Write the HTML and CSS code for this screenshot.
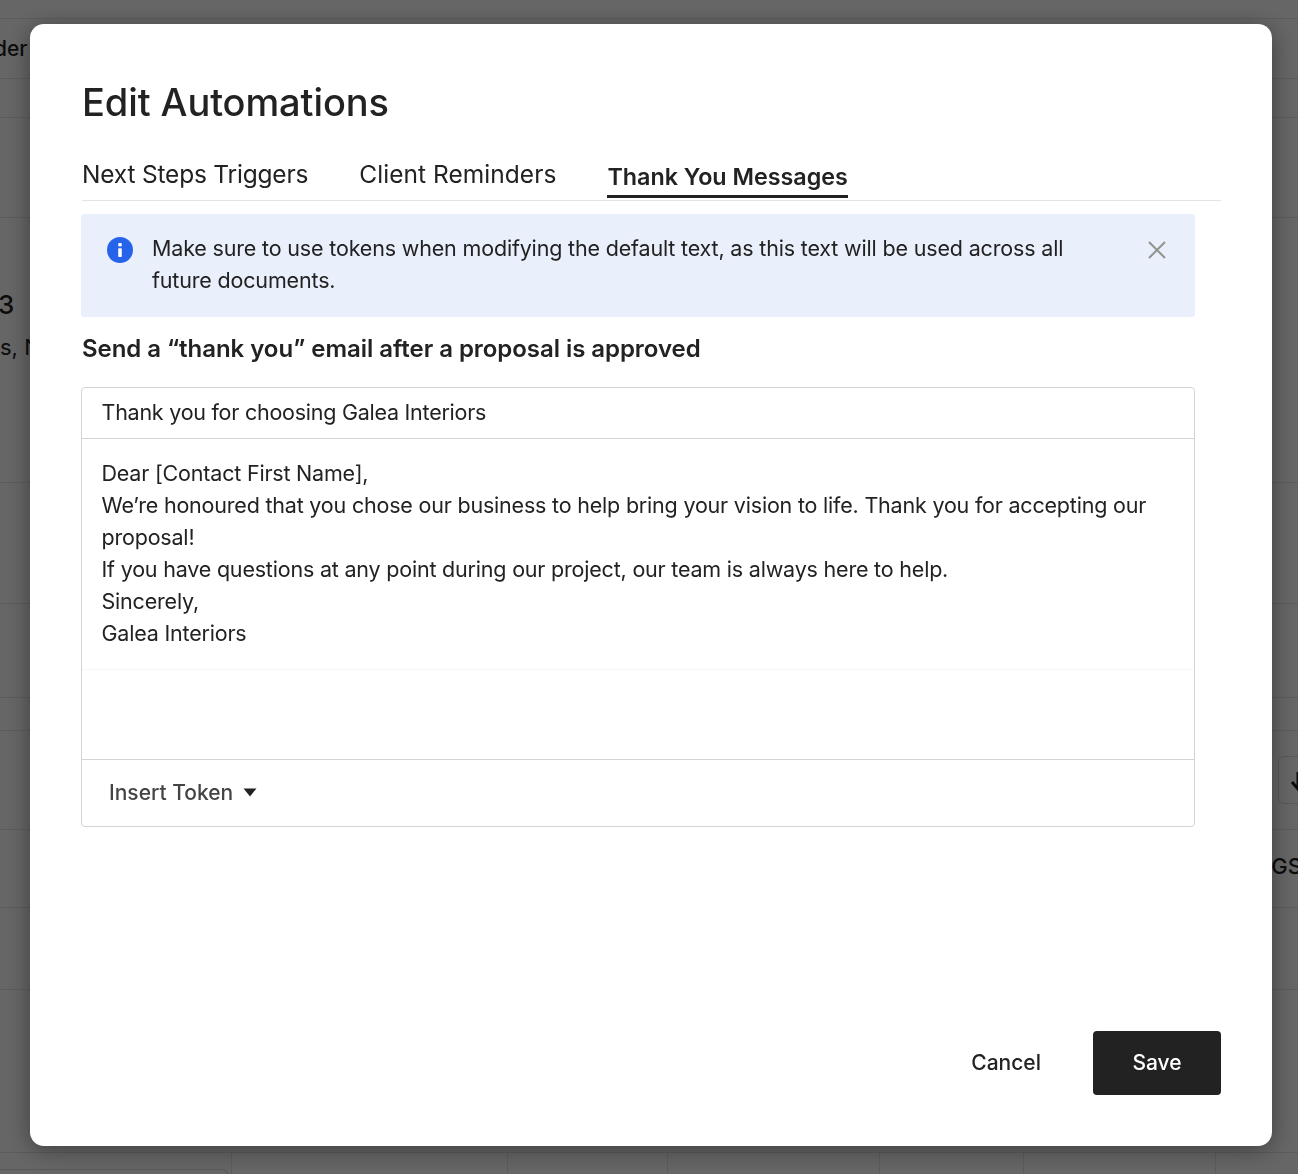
FILE: index.html
```html
<!DOCTYPE html>
<html lang="en">

<head>
    <meta charset="UTF-8">
    <meta name="viewport" content="width=device-width, initial-scale=1.0">
    <title>Edit Automations</title>
    <link rel="stylesheet" href="styles.css">
</head>

<body>

    <!-- page behind the dialog -->
    <div class="page">
        <div class="page-row row-top"></div>
        <div class="page-row row-a"><span class="row-left">der</span></div>
        <div class="page-row row-b"></div>
        <div class="page-row row-c"></div>
        <div class="page-row row-d">
            <span class="big">3</span>
            <span class="sub">s, N</span>
        </div>
        <div class="page-row row-e"></div>
        <div class="page-row row-f"></div>
        <div class="page-row row-g"></div>
        <div class="page-row row-h">
            <span class="row-btn">
                <svg viewBox="0 0 14 20" width="14" height="20">
                    <path d="M7 0V15M1 10L7 17L13 10" stroke="#222" stroke-width="3" fill="none"></path>
                </svg>
            </span>
        </div>
        <div class="page-row row-i"><span class="row-right">GS</span></div>
        <div class="page-row row-j"></div>
        <div class="page-row row-k"></div>
        <div class="page-cells">
            <div class="cell cell-1"><span class="cell-box"></span></div>
            <div class="cell cell-2"></div>
            <div class="cell cell-3"></div>
            <div class="cell cell-4"></div>
            <div class="cell cell-5"></div>
            <div class="cell cell-6"></div>
        </div>
    </div>

    <div class="overlay"></div>

    <div class="modal">
        <h1 class="modal-title">Edit Automations</h1>

        <div class="tabs">
            <span class="tab tab-next">Next Steps Triggers</span>
            <span class="tab tab-client">Client Reminders</span>
            <span class="tab active">Thank You Messages</span>
        </div>

        <div class="content">
            <div class="notice">
                <svg class="notice-icon" viewBox="0 0 26 26" width="26" height="26">
                    <circle cx="13" cy="13" r="13" fill="#2563eb"></circle>
                    <rect x="11.2" y="6" width="3.6" height="3.4" rx="1" fill="#fff"></rect>
                    <rect x="11.2" y="11.2" width="3.6" height="8.8" rx="0.8" fill="#fff"></rect>
                </svg>
                <p class="notice-text">Make sure to use tokens when modifying the default text, as this text will be used across all future documents.</p>
                <svg class="notice-close" viewBox="0 0 18 18" width="18" height="18">
                    <path d="M1 1L17 17M17 1L1 17" stroke="#8f948d" stroke-width="2" fill="none"></path>
                </svg>
            </div>

            <h2 class="section-title">Send a “thank you” email after a proposal is approved</h2>

            <div class="editor">
                <div class="subject">Thank you for choosing Galea Interiors</div>
                <div class="body-text">
                    <p>Dear [Contact First Name],</p>
                    <p>We’re honoured that you chose our business to help bring your vision to life. Thank you for accepting our proposal!</p>
                    <p>If you have questions at any point during our project, our team is always here to help.</p>
                    <p>Sincerely,</p>
                    <p>Galea Interiors</p>
                </div>
                <div class="blank"></div>
                <div class="toolbar">
                    <span class="token-btn">Insert Token</span>
                    <svg class="caret" viewBox="0 0 14 9" width="14" height="9">
                        <path d="M0.5 0.5H13.5L7 8.5Z" fill="#222"></path>
                    </svg>
                </div>
            </div>
        </div>

        <div class="actions">
            <button class="btn-cancel">Cancel</button>
            <button class="btn-save">Save</button>
        </div>
    </div>

</body>

</html>
```

FILE: styles.css
```css
* {
    box-sizing: border-box;
}

html,
body {
    margin: 0;
    height: 1174px;
    overflow: hidden;
}

body {
    font-family: "Inter", "Liberation Sans", sans-serif;
    color: #222;
    background-color: #fff;
}

.page {
    display: flex;
    flex-direction: column;
}

.page-row {
    display: flex;
    flex-direction: column;
    justify-content: center;
    border-bottom: 1px solid #e6e6e6;
    color: #222;
    font-size: 22px;
    font-weight: 500;
}

.row-top { height: 19px; }
.row-a { height: 60px; padding-bottom: 1px; }
.row-b { height: 39px; }
.row-c { height: 100px; }
.row-d { height: 265px; justify-content: flex-start; padding-top: 72px; }
.row-e { height: 121px; }
.row-f { height: 94px; }
.row-g { height: 33px; }
.row-h { height: 99px; align-items: flex-end; }
.row-i { height: 78px; align-items: flex-end; padding-bottom: 5px; }
.row-j { height: 82px; }
.row-k { height: 163px; }

.row-left {
    font-size: 21px;
    margin-left: -6px;
}

.big {
    font-size: 26px;
    line-height: 30px;
    margin-left: -2px;
}

.sub {
    font-weight: 400;
    line-height: 26px;
    margin-top: 14px;
}

.row-btn {
    width: 40px;
    height: 48px;
    margin-right: -20px;
    padding: 14px 0 0 12px;
    border: 1px solid #ddd;
    border-radius: 6px;
}

.row-right {
    margin-right: -4px;
}

.page-cells {
    display: flex;
    height: 22px;
}

.cell {
    border-right: 1px solid #e6e6e6;
}

.cell-1 { width: 232px; padding-top: 16px; }
.cell-2 { width: 276px; }
.cell-3 { width: 160px; }
.cell-4 { width: 212px; }
.cell-5 { width: 144px; }
.cell-6 { width: 192px; }

.cell-box {
    display: block;
    width: 228px;
    height: 20px;
    border: 1px solid #ddd;
    border-left: none;
    border-radius: 0 6px 0 0;
}

.overlay {
    position: fixed;
    inset: 0;
    background-color: rgba(0, 0, 0, 0.6);
}

.modal {
    position: fixed;
    left: 30px;
    top: 24px;
    width: 1242px;
    height: 1122px;
    padding: 54px 51px 51px 52px;
    background-color: #fff;
    border-radius: 14px;
    box-shadow: 0 4px 24px rgba(0, 0, 0, 0.4);
    display: flex;
    flex-direction: column;
}

.modal-title {
    margin: 0;
    font-size: 38px;
    line-height: 48px;
    font-weight: 500;
    letter-spacing: -0.1px;
}

.tabs {
    display: flex;
    gap: 51px;
    height: 52px;
    margin-top: 23px;
    border-bottom: 1px solid #e4e4e4;
}

.tab {
    font-size: 24.5px;
    line-height: 50px;
    height: 51px;
}

.tab-next {
    letter-spacing: -0.2px;
}

.tab-client {
    letter-spacing: 0.05px;
}

.active {
    font-size: 23.3px;
    font-weight: 600;
    border-bottom: 3px solid #222;
    line-height: 55px;
    height: 49px;
}

.content {
    flex: 1;
    margin-top: 13px;
    width: 1114px;
    margin-left: -1px;
}

.notice {
    display: flex;
    align-items: flex-start;
    height: 103px;
    padding: 18px 29px 0 26px;
    background-color: #e9effb;
    border-radius: 3px;
}

.notice-icon {
    flex: none;
    margin-top: 5px;
}

.notice-text {
    flex: 1;
    margin: 0 48px 0 19px;
    font-size: 21.5px;
    letter-spacing: -0.17px;
    line-height: 32px;
}

.notice-close {
    flex: none;
    margin-top: 9px;
}

.section-title {
    margin: 16px 0 22px;
    font-size: 24px;
    line-height: 32px;
    font-weight: 600;
    letter-spacing: -0.05px;
    padding-left: 1px;
}

.editor {
    display: flex;
    flex-direction: column;
    height: 440px;
    border: 1px solid #d4d4d4;
    border-radius: 4px;
}

.subject {
    height: 51px;
    padding: 0 19.5px;
    font-size: 21.5px;
    letter-spacing: -0.25px;
    line-height: 49px;
    border-bottom: 1px solid #d4d4d4;
}

.body-text {
    height: 231px;
    padding: 18px 19.5px 0;
    font-size: 21.5px;
    letter-spacing: -0.2px;
    line-height: 32px;
    border-bottom: 1px solid #f6f6f6;
}

.body-text p {
    margin: 0;
}

.blank {
    height: 90px;
    border-bottom: 1px solid #d4d4d4;
}

.toolbar {
    display: flex;
    align-items: center;
    flex: 1;
    padding: 0 27px 2px;
    gap: 10px;
}

.token-btn {
    font-size: 21px;
    font-weight: 500;
    color: #444;
}

.actions {
    display: flex;
    justify-content: flex-end;
    align-items: center;
    gap: 52px;
}

button {
    border: none;
    border-radius: 4px;
    font-family: inherit;
    font-size: 21px;
    font-weight: 500;
    height: 64px;
    background: none;
    color: #222;
    padding: 0 0 2px;
}

.btn-save {
    width: 128px;
    background-color: #222;
    color: #fff;
}
```
